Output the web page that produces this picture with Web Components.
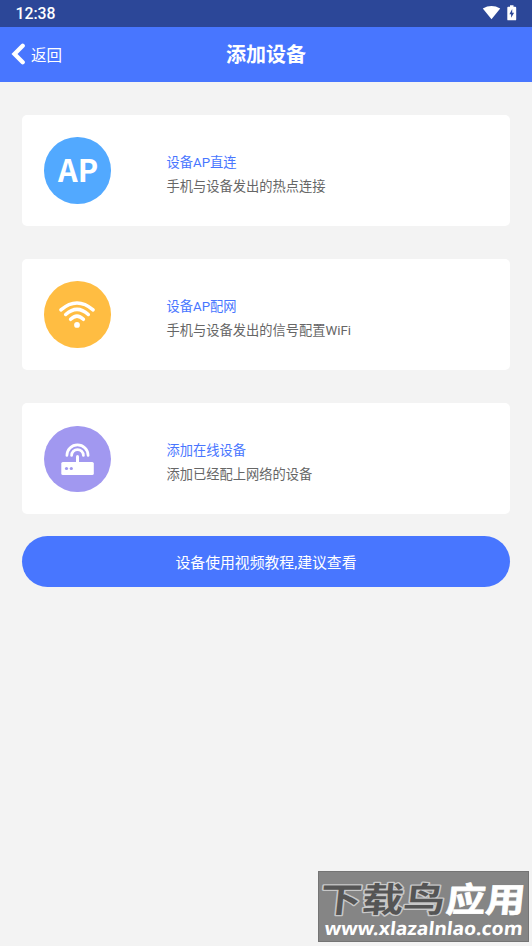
<!DOCTYPE html>
<html lang="zh-CN">
<head>
<meta charset="utf-8">
<title>添加设备</title>
<style>
html,body{margin:0;padding:0}
body{width:532px;height:946px;overflow:hidden;background:#f3f3f3;font-family:Roboto,"Noto Sans CJK SC",sans-serif}
</style>
</head>
<body>
<device-page></device-page>
<script>
function define(name, html){
  const t=document.createElement('template');
  t.innerHTML=html;
  customElements.define(name,class extends HTMLElement{
    constructor(){super();this.attachShadow({mode:'open'}).append(t.content.cloneNode(true));}
  });
}

define('status-bar',`<style>
:host{display:flex;align-items:center;justify-content:space-between;height:26.5px;box-sizing:border-box;padding:1px 15px 0 15.5px;background:#2c4798;color:#fff;font-size:15.8px;font-weight:500;line-height:26px}
svg{display:block;width:35px;height:16px;margin-top:-1.5px}
</style><span>12:38</span>
<svg viewBox="0 0 35 16" fill="#fff"><path d="M.8 3.500Q9.500 -1.300 18.200 3.500L9.500 14.300Z"/><path d="M28 .3h3.500v1.500h1.800q.9 0 .9.900V14.400q0 .9-.9.900h-7.100q-.9 0-.9-.9V2.700q0-.9.900-.9H28Z"/><path d="M30.200 4L27.400 9.200h1.700v3.500L32.100 7.700H30.200Z" fill="#2c4798"/></svg>`);

define('nav-bar',`<style>
:host{display:grid;grid-template-columns:1fr auto 1fr;align-items:center;height:55.5px;background:#4876ff;color:#fff}
.back{display:flex;align-items:center;font-size:15.5px;line-height:24px;gap:6px;padding-left:11px}
.back span{padding-top:3px}
svg{width:14px;height:24px;display:block}
h1{margin:0;padding-top:2px;font-size:20px;line-height:28px;font-weight:700}
</style><div class="back"><svg viewBox="0 0 14 24"><path d="M11.700 3.700L3.500 12L11.700 20.300" fill="none" stroke="#fff" stroke-width="4.300" stroke-linecap="round"/></svg><span><slot name="back"></slot></span></div><h1><slot></slot></h1>`);

define('option-card',`<style>
:host{display:grid;grid-template-columns:66.5px 1fr;column-gap:55.7px;align-items:center;height:110.83px;box-sizing:border-box;padding:0 22.17px;background:#fff;border-radius:5px;font-size:13.25px;line-height:24.2px}
.title{color:#4876ff}.desc{color:#666}
.text{padding-top:9px}
</style><slot name="icon"></slot><div class="text"><div class="title"><slot name="title"></slot></div><div class="desc"><slot></slot></div></div>`);

define('round-icon',`<style>
:host{display:flex;align-items:center;justify-content:center;width:66.5px;height:66.5px;border-radius:50%;background:var(--disc);color:#fff;font:700 30.7px/64px "Noto Sans CJK SC",sans-serif}
.box{height:66.5px;padding-left:var(--nudge,0)}
::slotted(svg){width:66.5px;height:66.5px;display:block}
</style><div class="box"><slot></slot></div>`);

define('pill-button',`<style>
:host{display:flex;align-items:center;justify-content:center;height:50.3px;border-radius:26px;background:#4876ff;color:#fff;font-size:14.85px}
</style><slot></slot>`);

define('site-mark',`<style>
:host{position:absolute;left:318px;top:871px;width:211px;height:71px;box-sizing:border-box;background:#858585;border:1px solid #747474}
svg{display:block;width:209px;height:69px}
text{font-family:"Noto Sans CJK SC",sans-serif;font-weight:700;stroke-linejoin:round;paint-order:stroke}
.url{font-family:"Noto Sans",sans-serif;font-weight:700}
</style><svg viewBox="0 0 209 69"><g transform="translate(0 40) skewX(-6)"><text font-size="38" textLength="125" lengthAdjust="spacingAndGlyphs" transform="scale(1 .9)" fill="#555" stroke="#c8c8c8" stroke-width="3">下载鸟</text><text x="126" font-size="38" textLength="79" lengthAdjust="spacingAndGlyphs" transform="scale(1 .9)" fill="#fff" stroke="#fff" stroke-width=".8">应用</text></g><text class="url" font-size="18.500" textLength="198" lengthAdjust="spacingAndGlyphs" transform="translate(5 63) skewX(-6)" fill="#fff">www.xlazalnlao.com</text></svg>`);

define('device-page',`<style>
:host{display:block;height:946px;background:#f3f3f3}
main{display:flex;flex-direction:column;padding:33.25px 22.17px 0}
option-card+option-card{margin-top:33.25px}
pill-button{margin-top:22.17px}
</style>
<status-bar></status-bar>
<nav-bar><span slot="back">返回</span>添加设备</nav-bar>
<main>
<option-card><round-icon slot="icon" style="--disc:#52a9ff;--nudge:1px">AP</round-icon><span slot="title">设备AP直连</span>手机与设备发出的热点连接</option-card>
<option-card><round-icon slot="icon" style="--disc:#ffbd42"><svg viewBox="0 0 66.500 66.500" fill="none" stroke="#fff" stroke-width="3.500" stroke-linecap="round"><path d="M16.900 28.900Q33 15.100 49.100 28.900M21.700 33.500Q33 23.300 44.300 33.500M26.600 38.300Q33 31.900 39.400 38.300"/><circle cx="33" cy="43.900" r="2.900" fill="#fff" stroke="none"/></svg></round-icon><span slot="title">设备AP配网</span>手机与设备发出的信号配置WiFi</option-card>
<option-card><round-icon slot="icon" style="--disc:#a198f0"><svg viewBox="0 0 66.500 66.500" fill="none" stroke="#fff" stroke-width="2.700" stroke-linecap="round"><path d="M22.900 29.500A10.600 10.600 0 0 1 44.100 29.500M27.600 29.500A5.900 5.900 0 0 1 39.400 29.500"/><path d="M33.500 30.500V38" stroke-width="3"/><rect x="17.300" y="36" width="32.500" height="13" rx="1.600" fill="#fff" stroke="none"/><circle cx="22.500" cy="42.500" r="1.600" fill="#a198f0" stroke="none"/><circle cx="27.300" cy="42.500" r="1.600" fill="#a198f0" stroke="none"/></svg></round-icon><span slot="title">添加在线设备</span>添加已经配上网络的设备</option-card>
<pill-button>设备使用视频教程,建议查看</pill-button>
</main>
<site-mark></site-mark>`);
</script>
</body>
</html>
